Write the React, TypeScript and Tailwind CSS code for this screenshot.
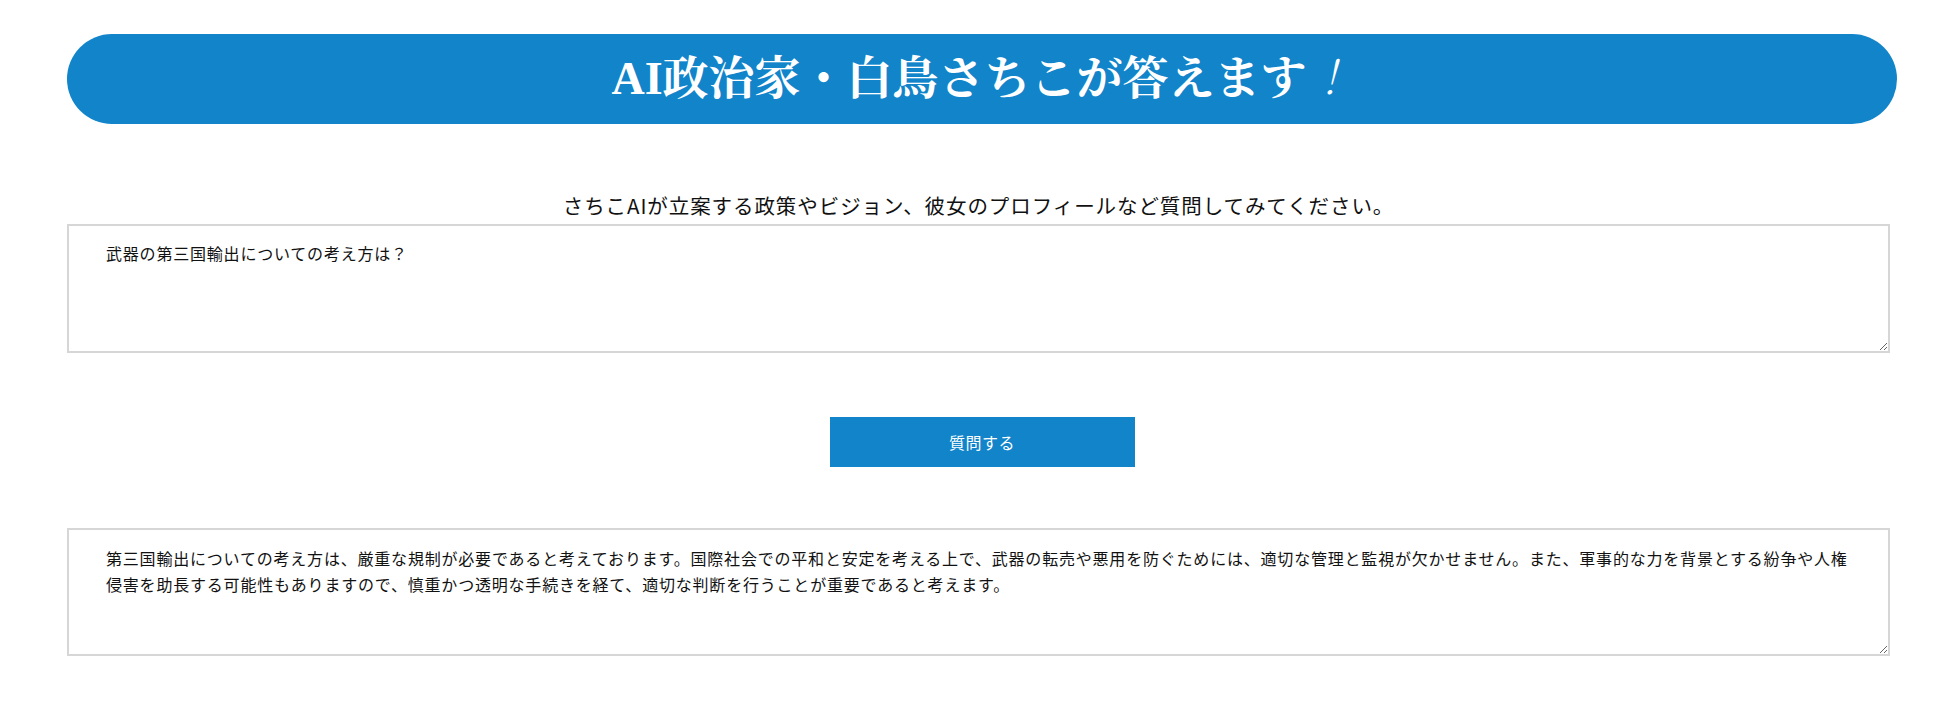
import React, { useState } from 'react';

const QUESTION = '武器の第三国輸出についての考え方は？';
const ANSWER =
  '第三国輸出についての考え方は、厳重な規制が必要であると考えております。国際社会での平和と安定を考える上で、武器の転売や悪用を防ぐためには、適切な管理と監視が欠かせません。また、軍事的な力を背景とする紛争や人権侵害を助長する可能性もありますので、慎重かつ透明な手続きを経て、適切な判断を行うことが重要であると考えます。';

export default function App() {
  const [question, setQuestion] = useState(QUESTION);
  const [answer] = useState(ANSWER);

  return (
    <div className="min-h-screen w-full bg-white pl-[67px] pr-[53px] pt-[34px] font-['Noto_Sans_CJK_JP','Noto_Sans',sans-serif] text-[#111]">
      {/* HEADER */}
      <div className="h-[90px] w-full rounded-full bg-[#1184ca] flex items-center justify-center">
        <h1 className="text-white text-[46px] font-bold leading-none font-['Liberation_Serif','Noto_Serif_CJK_JP','Noto_Sans_CJK_JP',serif]">
          AI政治家・白鳥さちこが答えます<span className="italic font-light">！</span>
        </h1>
      </div>

      {/* QUESTION */}
      <p className="mt-[66px] mr-[7px] text-center text-[20.5px] leading-[31px] tracking-[0.045em] text-[#111]">
        さちこAIが立案する政策やビジョン、彼女のプロフィールなど質問してみてください。
      </p>
      <textarea
        value={question}
        onChange={(e) => setQuestion(e.target.value)}
        className="block mt-[3px] w-[1823px] h-[129px] border-2 border-[#d6d6d6] bg-white pt-[14px] pl-[37px] pr-[30px] text-[16px] leading-[26px] tracking-[0.05em] text-[#111] outline-none"
      />

      <div className="flex justify-center mt-[64px]">
        <button className="w-[305px] h-[50px] bg-[#1184ca] text-white text-[16px] tracking-[0.03em]">
          質問する
        </button>
      </div>

      {/* ANSWER */}
      <textarea
        value={answer}
        readOnly
        className="block mt-[61px] w-[1823px] h-[128px] border-2 border-[#d6d6d6] bg-white pt-[15px] pl-[37px] pr-[30px] text-[16px] leading-[26px] tracking-[0.05em] text-[#111] outline-none"
      />
    </div>
  );
}
